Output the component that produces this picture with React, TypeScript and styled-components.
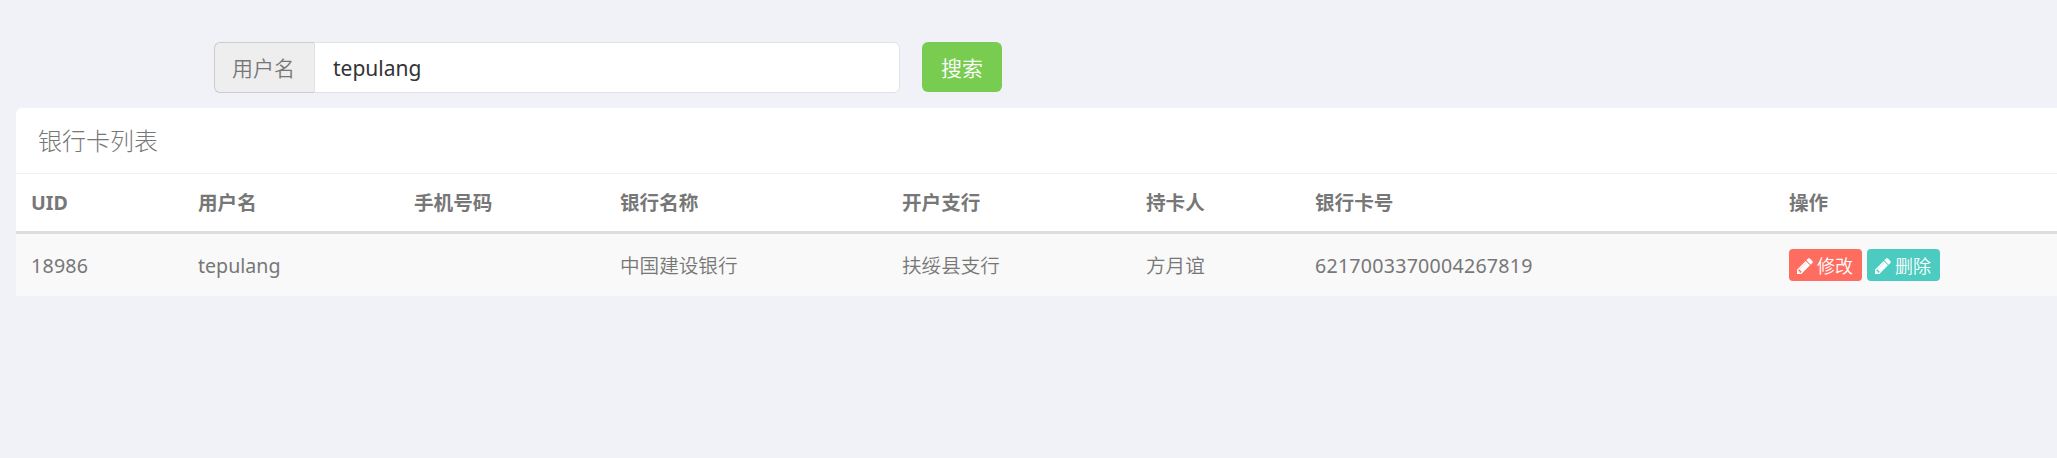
import React from "react";
import styled, { createGlobalStyle } from "styled-components";

const GlobalStyle = createGlobalStyle`
  * { box-sizing: border-box; }
  body {
    margin: 0;
    background: #f1f2f7;
    color: #777;
    font-family: "Noto Sans", "Noto Sans CJK SC", sans-serif;
    font-size: 19.6px;
    overflow: hidden;
  }
`;

const Page = styled.main`
  height: 458px;
  padding: 42px 0 0 16px;
  overflow: hidden;
`;

const SearchForm = styled.form`
  display: flex;
  margin-left: 198px;
  height: 51px;
`;

const Addon = styled.label`
  width: 100px;
  flex: none;
  display: flex;
  align-items: center;
  padding: 0 0 2px 17px;
  border: 1px solid #ccc;
  border-right: 0;
  border-radius: 6px 0 0 6px;
  background: #eee;
  font-size: 21px;
  font-weight: 350;
`;

const Input = styled.input`
  width: 586px;
  height: 51px;
  padding: 1px 18px 0;
  border: 1px solid #e2e2e4;
  border-radius: 0 6px 6px 0;
  outline: 0;
  background: #fff;
  color: #333;
  font: 21px "Noto Sans", "Noto Sans CJK SC", sans-serif;
`;

const SearchButton = styled.button`
  width: 80px;
  height: 50px;
  margin-left: 22px;
  padding: 0 0 1px;
  border: 0;
  border-radius: 6px;
  background: #78cd51;
  color: #fff;
  font: 350 21px "Noto Sans CJK SC", sans-serif;
`;

const Panel = styled.section`
  width: 2100px;
  margin-top: 15px;
  border-radius: 6px 0 0 0;
  background: #fff;
`;

const PanelHeading = styled.header`
  height: 66px;
  padding-left: 22px;
  border-bottom: 1px solid #eff2f7;
  font-size: 24px;
  font-weight: 300;
  line-height: 65px;
`;

const Table = styled.table`
  width: 100%;
  table-layout: fixed;
  border-collapse: separate;
  border-spacing: 0;
`;

const Column = styled.col<{ $width?: number }>`
  width: ${({ $width }) => ($width ? `${$width}px` : "auto")};
`;

const HeadCell = styled.th`
  height: 60px;
  padding: 0 15px;
  border-bottom: 3px solid #ddd;
  text-align: left;
  line-height: 57px;
`;

const Cell = styled.td<{ $light?: boolean; $spacing?: number }>`
  height: 62px;
  padding: 1px 15px 0;
  background: #f9f9f9;
  font-weight: ${({ $light }) => ($light ? 350 : 400)};
  letter-spacing: ${({ $spacing = 0 }) => $spacing}px;
  line-height: 61px;
  white-space: nowrap;
`;

const Actions = styled.div`
  display: flex;
  gap: 5px;
  padding-bottom: 1px;
`;

const ActionButton = styled.button<{ $color: string }>`
  display: flex;
  align-items: center;
  gap: 4px;
  width: 73px;
  height: 32px;
  padding: 0 0 0 8px;
  border: 0;
  border-radius: 4px;
  background: ${({ $color }) => $color};
  color: #fff;
  font: 350 18px/30px "Noto Sans CJK SC", sans-serif;
  white-space: nowrap;
`;

const PencilSvg = styled.svg`
  width: 16px;
  height: 16px;
  flex: none;
  margin-top: 2px;
  fill: currentColor;
`;

const Pencil = () => (
  <PencilSvg viewBox="0 0 1536 1536" aria-hidden="true">
    <path d="M363 1408l91-91-235-235-91 91v107h128v128h107zm523-928q0-22-22-22-10 0-17 7l-542 542q-7 7-7 17 0 22 22 22 10 0 17-7l542-542q7-7 7-17zm-54-192l416 416-832 832h-416v-416zm683 96q0 53-37 90l-166 166-416-416 166-165q36-38 90-38 53 0 91 38l235 234q37 39 37 91z" />
    <path d="M320 1024L864 480" stroke="currentColor" strokeWidth="90" opacity="0.65" />
  </PencilSvg>
);

const columns = [
  { title: "UID", width: 167 },
  { title: "用户名", width: 216 },
  { title: "手机号码", width: 206 },
  { title: "银行名称", width: 282 },
  { title: "开户支行", width: 244 },
  { title: "持卡人", width: 169 },
  { title: "银行卡号", width: 474 },
  { title: "操作" },
];

export default function App() {
  return (
    <>
      <GlobalStyle />
      <Page>
        <SearchForm onSubmit={(e) => e.preventDefault()}>
          <Addon htmlFor="username">用户名</Addon>
          <Input id="username" defaultValue="tepulang" />
          <SearchButton>搜索</SearchButton>
        </SearchForm>
        <Panel>
          <PanelHeading>银行卡列表</PanelHeading>
          <Table>
            <colgroup>
              {columns.map((c) => (
                <Column key={c.title} $width={c.width} />
              ))}
            </colgroup>
            <thead>
              <tr>
                {columns.map((c) => (
                  <HeadCell key={c.title}>{c.title}</HeadCell>
                ))}
              </tr>
            </thead>
            <tbody>
              <tr>
                <Cell $spacing={0.25}>18986</Cell>
                <Cell>tepulang</Cell>
                <Cell />
                <Cell $light>中国建设银行</Cell>
                <Cell $light>扶绥县支行</Cell>
                <Cell $light>方月谊</Cell>
                <Cell $spacing={0.25}>6217003370004267819</Cell>
                <Cell>
                  <Actions>
                    <ActionButton $color="#ff6c60"><Pencil />修改</ActionButton>
                    <ActionButton $color="#4ccbc0"><Pencil />删除</ActionButton>
                  </Actions>
                </Cell>
              </tr>
            </tbody>
          </Table>
        </Panel>
      </Page>
    </>
  );
}
